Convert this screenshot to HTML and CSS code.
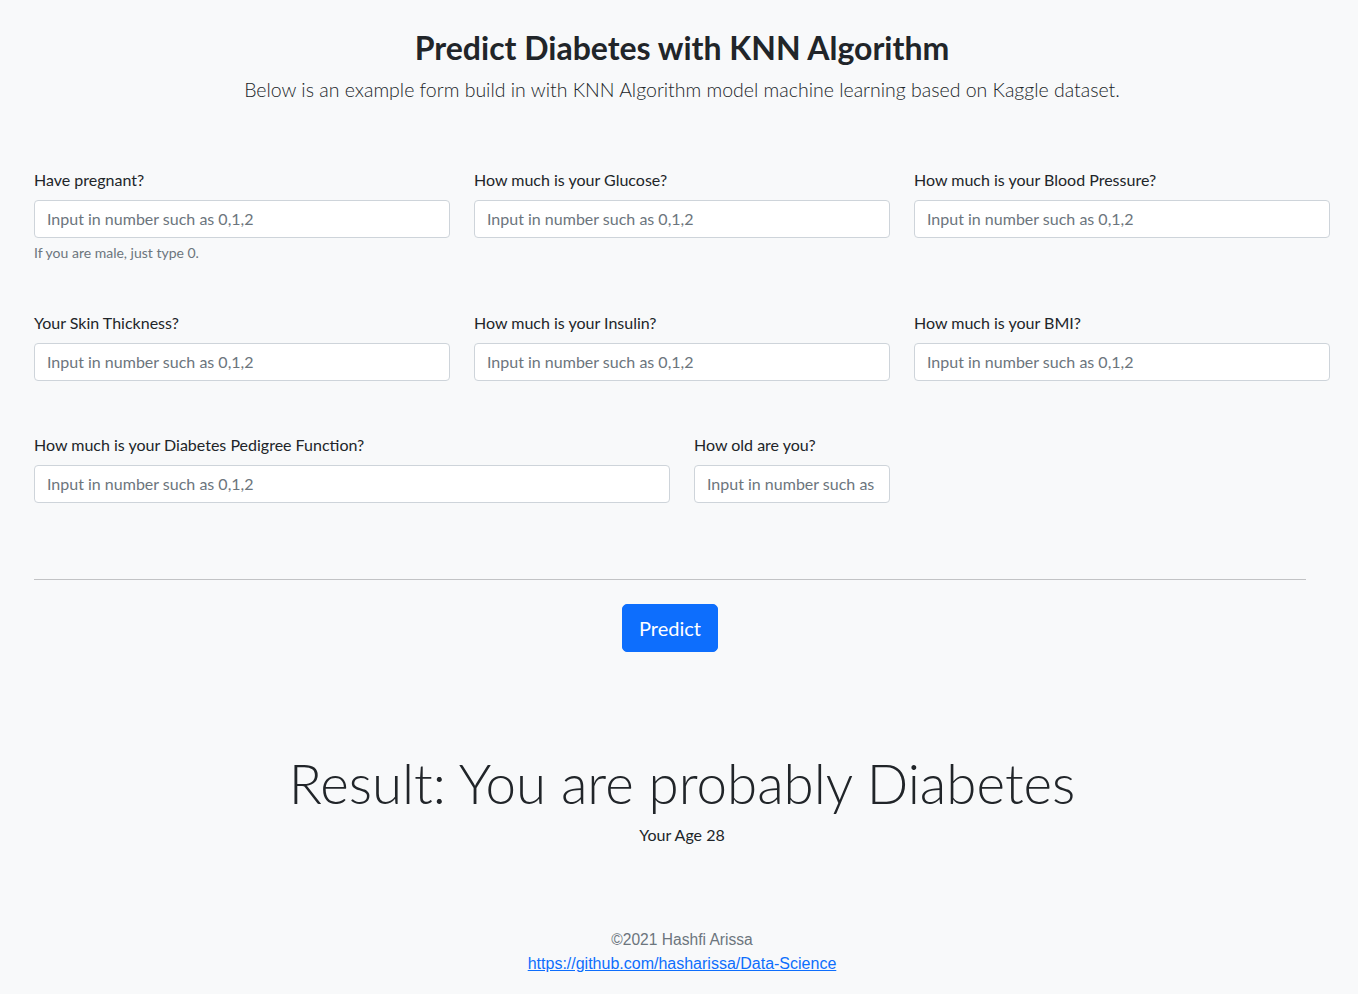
FILE: index.html
```html
<!DOCTYPE html>
<html lang="en">
<head>
<meta charset="utf-8">
<title>Predict Diabetes with KNN Algorithm</title>
<link rel="stylesheet" href="styles.css">
</head>
<body>
<main class="container">
  <header class="intro">
    <h2 class="title">Predict Diabetes with KNN Algorithm</h2>
    <p class="lead">Below is an example form build in with KNN Algorithm model machine learning based on Kaggle dataset.</p>
  </header>

  <form class="form">
    <div class="row row-three">
      <div class="field">
        <label class="label" for="preg">Have pregnant?</label>
        <input class="input" id="preg" type="text" placeholder="Input in number such as 0,1,2">
        <div class="help">If you are male, just type 0.</div>
      </div>
      <div class="field">
        <label class="label" for="glu">How much is your Glucose?</label>
        <input class="input" id="glu" type="text" placeholder="Input in number such as 0,1,2">
      </div>
      <div class="field">
        <label class="label" for="bp">How much is your Blood Pressure?</label>
        <input class="input" id="bp" type="text" placeholder="Input in number such as 0,1,2">
      </div>
    </div>

    <div class="row row-three row-second">
      <div class="field">
        <label class="label" for="skin">Your Skin Thickness?</label>
        <input class="input" id="skin" type="text" placeholder="Input in number such as 0,1,2">
      </div>
      <div class="field">
        <label class="label" for="ins">How much is your Insulin?</label>
        <input class="input" id="ins" type="text" placeholder="Input in number such as 0,1,2">
      </div>
      <div class="field">
        <label class="label" for="bmi">How much is your BMI?</label>
        <input class="input" id="bmi" type="text" placeholder="Input in number such as 0,1,2">
      </div>
    </div>

    <div class="row row-last">
      <div class="field">
        <label class="label" for="dpf">How much is your Diabetes Pedigree Function?</label>
        <input class="input" id="dpf" type="text" placeholder="Input in number such as 0,1,2">
      </div>
      <div class="field">
        <label class="label" for="age">How old are you?</label>
        <input class="input" id="age" type="text" placeholder="Input in number such as 0,1,2">
      </div>
    </div>

    <div class="actions">
      <hr class="divider">
      <button class="btn" type="button">Predict</button>
    </div>
  </form>

  <section class="result">
    <h1 class="result-title">Result: You are probably Diabetes</h1>
    <p class="result-sub">Your Age 28</p>
  </section>

  <footer class="footer">
    <p class="copy">©2021 Hashfi Arissa</p>
    <a class="link" href="#">https://github.com/hasharissa/Data-Science</a>
  </footer>
</main>
</body>
</html>
```

FILE: styles.css
```css
* { box-sizing: border-box; }

html, body {
  margin: 0;
  padding: 0;
}

body {
  background: #f8f9fa;
  color: #212529;
  font-family: "Lato", "Open Sans", "Liberation Sans", sans-serif;
  font-size: 16px;
  line-height: 1.5;
}

.container {
  width: 1296px;
  margin-left: 34px;
}

.intro {
  text-align: center;
  padding-top: 29px;
}

.title {
  margin: 0;
  font-size: 32px;
  font-weight: 700;
  line-height: 1.2;
}

.lead {
  margin: 8px 0 0;
  font-size: 19.5px;
  font-weight: 300;
}

.form {
  margin-top: 63px;
}

.row {
  display: grid;
  column-gap: 24px;
}

.row-three {
  grid-template-columns: repeat(3, 1fr);
}

.row-second {
  margin-top: 48px;
}

.row-last {
  grid-template-columns: 636px 196px;
  margin-top: 52px;
}

.label {
  display: block;
  margin-bottom: 8px;
  font-size: 16px;
}

.input {
  display: block;
  width: 100%;
  height: 38px;
  padding: 6px 12px;
  font-family: inherit;
  font-size: 16px;
  color: #212529;
  background: #fff;
  border: 1px solid #ced4da;
  border-radius: 4px;
  outline: none;
}

.input::placeholder {
  color: #6c757d;
  opacity: 1;
}

.help {
  margin-top: 4px;
  font-size: 14px;
  color: #6c757d;
}

.actions {
  width: 1272px;
  margin-top: 76px;
  text-align: center;
}

.divider {
  margin: 0;
  border: 0;
  border-top: 1px solid #c2c3c5;
}

.btn {
  margin-top: 24px;
  height: 48px;
  padding: 0 16px;
  font-family: inherit;
  font-size: 20px;
  color: #fff;
  background: #0d6efd;
  border: 1px solid #0d6efd;
  border-radius: 5px;
}

.result {
  text-align: center;
  margin-top: 99px;
}

.result-title {
  margin: 0;
  font-size: 54.7px;
  font-weight: 300;
  line-height: 1.2;
}

.result-sub {
  margin: 7px 0 0;
  font-size: 16px;
}

.footer {
  text-align: center;
  margin-top: 81px;
  font-family: "Liberation Sans", Arial, sans-serif;
  font-size: 16px;
  color: #6c757d;
}

.copy {
  margin: 0;
  font-size: 15.6px;
}

.link {
  color: #0d6efd;
}
```
